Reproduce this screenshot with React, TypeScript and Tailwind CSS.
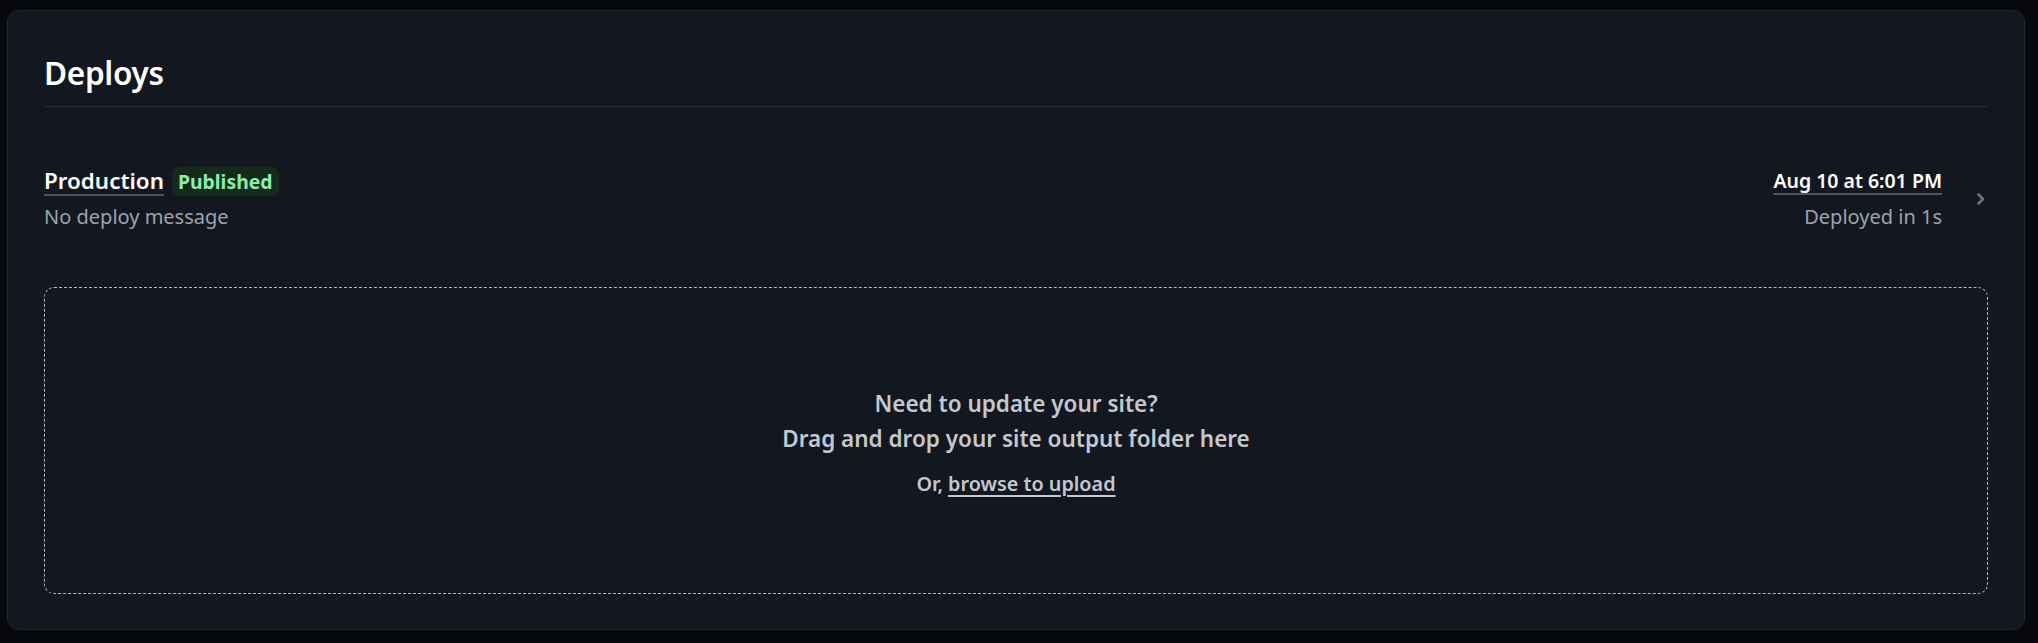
import React from "react";

export default function App() {
  return (
    <div
      className="w-[2038px] h-[643px] bg-[#07090c] pt-[10px] pl-[7px] pr-[13px] pb-[13px]"
      style={{ fontFamily: '"Noto Sans", "Open Sans", sans-serif' }}
    >
      <div className="h-full rounded-[12px] border border-[#22272e] bg-[#131820] px-[36px] pt-[42px]">
        <div className="border-b border-[#272c34] pb-[13px]">
          <h1 className="text-[31.5px] leading-[40px] font-semibold text-white tracking-[-0.3px]">Deploys</h1>
        </div>
        <div className="flex items-center pt-[56px] pb-[52px]">
          <div className="flex-1">
            <div className="flex items-center gap-[8px] h-[36px]">
              <a className="text-[22.4px] leading-[36px] font-semibold text-white underline decoration-[#4b5563] decoration-2 underline-offset-[5px]">
                Production
              </a>
              <span className="rounded-[7px] bg-[#15291c] px-[6px] text-[19.4px] leading-[29px] font-bold text-[#86efac]">
                Published
              </span>
            </div>
            <div className="text-[20px] leading-[36px] text-[#9ca3af]">No deploy message</div>
          </div>
          <div className="flex flex-col items-end">
            <a className="text-[19.5px] leading-[36px] font-semibold text-white underline decoration-[#4b5563] decoration-2 underline-offset-[5px]">
              Aug 10 at 6:01 PM
            </a>
            <div className="text-[20px] leading-[36px] text-[#9ca3af]">Deployed in 1s</div>
          </div>
          <div className="w-[46px] flex justify-end pr-[1px]">
            <svg width="12" height="14" viewBox="0 0 12 14" fill="none">
              <path d="M3.5 2.5 L8 7 L3.5 11.5" stroke="#6b7280" strokeWidth="2.6" strokeLinecap="round" strokeLinejoin="round" />
            </svg>
          </div>
        </div>
        <div className="h-[307px] pt-[5px] rounded-[10px] border border-dashed border-[#b4b9c0] flex flex-col items-center justify-center text-[#c4c8ce]">
          <div className="text-[22.5px] leading-[35px] font-semibold">Need to update your site?</div>
          <div className="text-[22.5px] leading-[35px] font-semibold">Drag and drop your site output folder here</div>
          <div className="mt-[10px] text-[19.8px] leading-[35px] font-semibold">
            Or, <a className="underline decoration-2 underline-offset-[4px]">browse to upload</a>
          </div>
        </div>
      </div>
    </div>
  );
}
